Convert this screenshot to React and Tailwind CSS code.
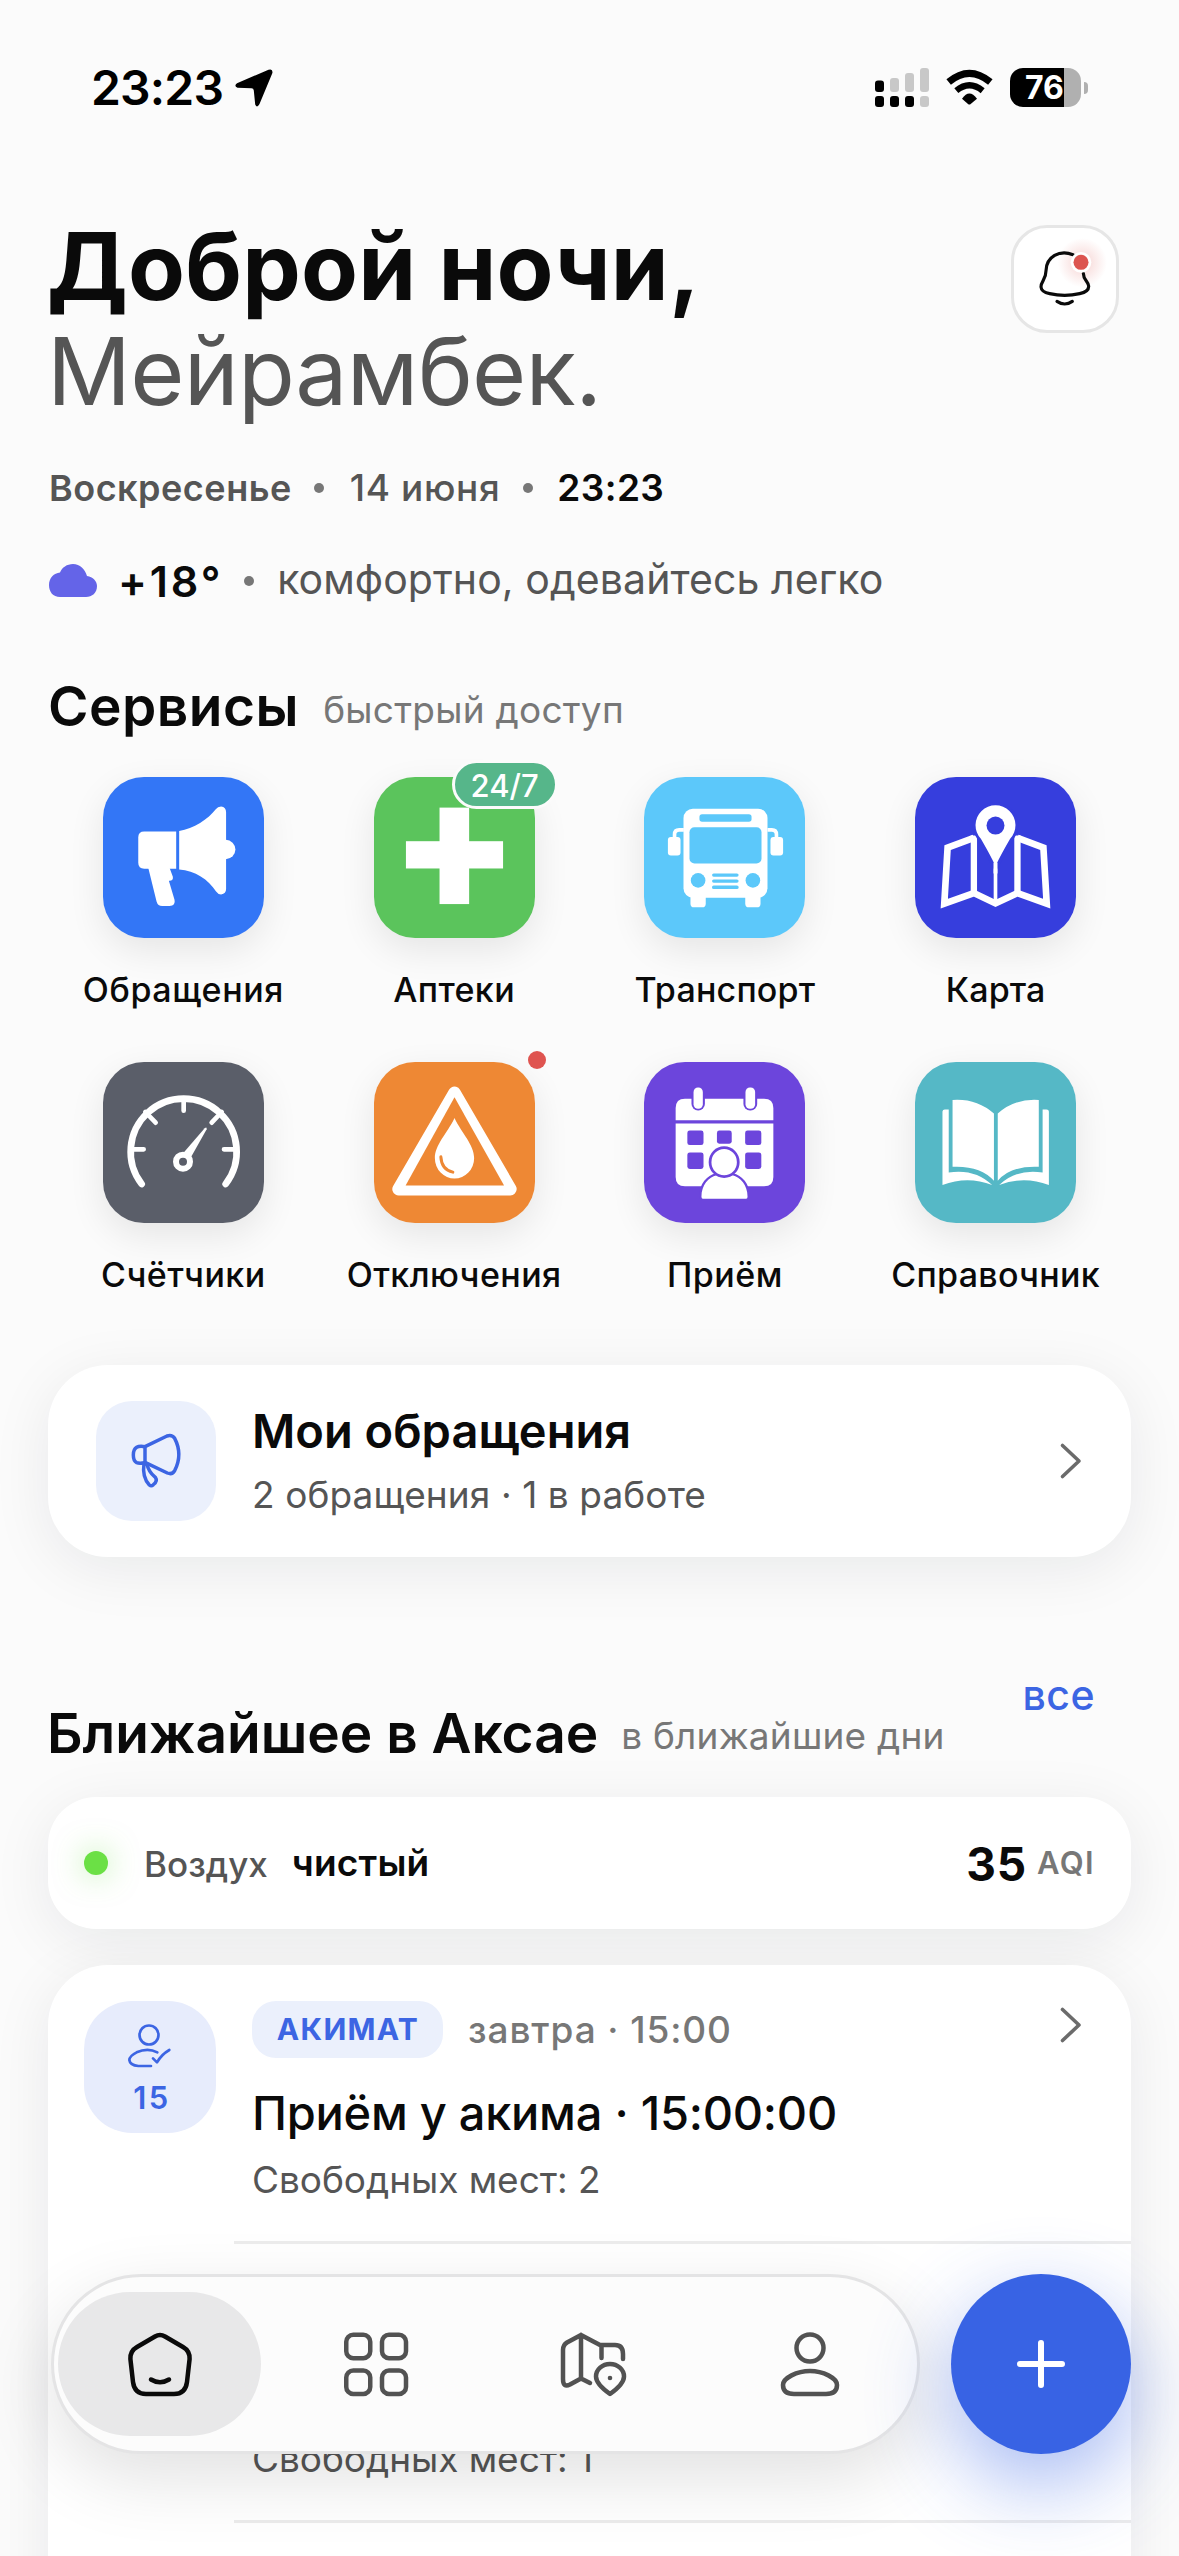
function StatusBar() {
  return (
    <div className="flex h-[175px] items-center pl-[91px] pr-[91px] text-black">
      <span className="text-[48px] font-semibold tracking-[-0.8px]">23:23</span>
      <svg className="ml-[12px] h-[38px] w-[38px]" viewBox="0 0 38 38">
        <path d="M33.5.8Q38-.8 37.4 4L24.5 35Q22 39.500 20.200 35.500L18.800 21.500Q18.600 19.300 16.500 19.200L2.500 18.800Q-1.500 17 2 14.200Z" />
      </svg>
      <div className="ml-auto flex items-center">
        <svg className="h-[39px] w-[54px]" viewBox="0 0 54 39">
          <rect x="0" y="12.500" width="9" height="11.500" rx="3" />
          <rect x="15" y="10" width="9" height="14" rx="3" fill="#c8c8c8" />
          <rect x="30" y="5" width="9" height="19" rx="3" fill="#c8c8c8" />
          <rect x="45" y="0" width="9" height="24" rx="3" fill="#c8c8c8" />
          <rect x="0" y="28" width="9" height="11" rx="3" />
          <rect x="15" y="28" width="9" height="11" rx="3" />
          <rect x="30" y="28" width="9" height="11" rx="3" />
          <rect x="45" y="28" width="9" height="11" rx="3" fill="#c8c8c8" />
        </svg>
        <svg className="ml-[17px] h-[39px] w-[47px]" viewBox="258 55 141 117" fill="none" stroke="#000">
          <path d="M266 97Q328 45 391 97" strokeWidth="21" />
          <path d="M289 123Q328 91 368 123" strokeWidth="19" />
          <path d="M306 147Q328 116 351 147L332 163Q328 166 324 163Z" fill="#000" stroke="none" />
        </svg>
        <div className="ml-[17px] flex h-[39px] w-[71px] items-center overflow-hidden rounded-[13px] bg-[linear-gradient(90deg,#000_54px,#b0b0b0_54px)] pl-[15px]">
          <span className="text-[32px] font-bold leading-[39px] text-white">76</span>
        </div>
        <div className="ml-[3px] h-[12px] w-[4px] rounded-r-full bg-[#b0b0b0]" />
      </div>
    </div>
  );
}

function Bell() {
  return (
    <button className="mr-[12px] mt-[11px] h-[108px] w-[108px] shrink-0 rounded-[36px] border-[3px] border-[#e6e6e6] bg-white">
      <svg className="-m-[3px] h-[108px] w-[108px]" viewBox="454 525 324 324" fill="none" stroke="#0a0a0a" strokeWidth="9.500" strokeLinecap="round">
        <defs>
          <radialGradient id="bellGlow">
            <stop offset="0.3" stopColor="#dc5550" stopOpacity="0.18" />
            <stop offset="1" stopColor="#dc5550" stopOpacity="0" />
          </radialGradient>
        </defs>
        <circle cx="668" cy="638" r="74" fill="url(#bellGlow)" stroke="none" />
        <path d="M640 614C600 598 560 620 559 662C559 690 544 692 544 711Q545 726 570 731Q615 741 660 731Q688 725 687 708C686 694 671 690 671 670" />
        <path d="M592 754Q615 770 638 754" />
        <circle cx="664" cy="637" r="31" fill="#fff" stroke="none" />
        <circle cx="664" cy="637" r="22.500" fill="#dc5550" stroke="none" />
      </svg>
    </button>
  );
}

function MegaphoneTile() {
  return (
    <svg className="h-full w-full" viewBox="68 82 484 484" fill="#fff">
      <path d="M288 246H192Q174 246 174 264V340Q174 358 192 358H288Z" />
      <path d="M204 355L229 456Q233 470 246 470H268Q287 469 283 451L266 394Q280 395 278 382L268 355Z" />
      <path d="M297 244C340 238 385 208 407 179Q413 171 423 171Q438 173 438 188V419Q438 434 423 435Q414 435 408 426C385 390 345 364 297 360Z" />
      <circle cx="437" cy="300" r="29" />
    </svg>
  );
}

function CrossTile() {
  return (
    <svg className="h-full w-full" viewBox="881 84 484 480" fill="#fff">
      <rect x="1078" y="174" width="89" height="290" />
      <rect x="977" y="275" width="292" height="82" />
    </svg>
  );
}

function BusTile() {
  return (
    <svg className="h-full w-full" viewBox="132 84 485 480" fill="#fff">
      <rect x="251" y="177" width="253" height="268" rx="28" />
      <rect x="272" y="420" width="46" height="54" rx="11" />
      <rect x="437" y="420" width="46" height="54" rx="11" />
      <rect x="204" y="262" width="38" height="56" rx="9" />
      <rect x="513" y="262" width="38" height="56" rx="9" />
      <path d="M252 241H238Q224 241 224 255V266M504 241H517Q531 241 531 255V266" fill="none" stroke="#fff" strokeWidth="11" />
      <g fill="#5cc8fa">
        <rect x="299" y="194" width="157" height="22" rx="8" />
        <rect x="269" y="233" width="217" height="109" rx="15" />
        <circle cx="295" cy="393" r="22" />
        <circle cx="460" cy="393" r="22" />
        <rect x="337" y="372" width="80" height="10" rx="5" />
        <rect x="337" y="390" width="80" height="10" rx="5" />
        <rect x="337" y="408" width="80" height="11" rx="5" />
      </g>
    </svg>
  );
}

function MapTile() {
  return (
    <svg className="h-full w-full" viewBox="945 82 484 484" fill="none" stroke="#fff">
      <path d="M1122 265L1043 294L1033 463L1122 431L1187 462L1253 431L1341 463L1331 294L1253 265" strokeWidth="20" strokeMiterlimit="6" />
      <path d="M1122 258V434M1253 258V434" strokeWidth="19" />
      <path d="M1187 340V462" strokeWidth="11" />
      <path d="M1187 350L1139 262A60 60 0 1 1 1235 262Z" stroke="#363edd" strokeWidth="18" />
      <path d="M1181 340H1193V372H1181Z" fill="#fff" stroke="none" />
      <path d="M1187 352Q1180 332 1143 268A60 60 0 1 1 1231 268Q1194 332 1187 352Z" fill="#fff" stroke="none" />
      <circle cx="1187" cy="228" r="27" fill="#363edd" stroke="none" />
    </svg>
  );
}

function GaugeTile() {
  return (
    <svg className="h-full w-full" viewBox="130 97 481 483" fill="none" stroke="#fff" strokeLinecap="round">
      <path d="M245 463A159 159 0 1 1 497 463" strokeWidth="20" />
      <path d="M371 206V243M256 247L287 279M485 247L455 279M214 359H251M492 359H528" strokeWidth="14" />
      <path d="M368 372L434 296Q441 290 440 299L392 384Z" fill="#fff" stroke="none" />
      <circle cx="369" cy="396" r="21" strokeWidth="18" />
    </svg>
  );
}

function OutageTile() {
  return (
    <svg className="h-full w-full" viewBox="941 99 484 480" fill="#fff">
      <path d="M1183 190L1015 479H1351Z" stroke="#fff" strokeWidth="38" strokeLinejoin="round" />
      <path d="M1183 203L1332 468H1036Z" fill="#ee8834" />
      <path d="M1183 265C1205 312 1242 345 1242 386A59 61 0 0 1 1124 386C1124 345 1161 312 1183 265Z" />
      <path d="M1142 382Q1144 420 1178 428" fill="none" stroke="#ee8834" strokeWidth="9" strokeLinecap="round" />
    </svg>
  );
}

function CalendarTile() {
  return (
    <svg className="h-full w-full" viewBox="129 99 468 479" preserveAspectRatio="none" fill="#fff">
      <path d="M221 272V236Q221 208 248 208H478Q505 208 505 236V272Z" />
      <path d="M221 282H505V441Q505 469 478 469H248Q221 469 221 441Z" />
      <g fill="#6c45dc">
        <rect x="267" y="180" width="39" height="63" rx="19" />
        <rect x="418" y="180" width="40" height="63" rx="19" />
        <rect x="255" y="303" width="47" height="43" rx="7" />
        <rect x="341" y="303" width="43" height="39" rx="7" />
        <rect x="423" y="303" width="47" height="43" rx="7" />
        <rect x="255" y="368" width="47" height="49" rx="7" />
        <rect x="423" y="368" width="47" height="49" rx="7" />
      </g>
      <rect x="273" y="175" width="27" height="63" rx="13" />
      <rect x="424" y="175" width="28" height="63" rx="13" />
      <path d="M300 505Q296 505 296 498C296 465 317 441 340 436Q362 446 386 436C409 441 430 465 430 498Q430 505 426 505Z" stroke="#6c45dc" strokeWidth="13" />
      <path d="M300 506Q296 506 296 500C296 465 317 441 340 436Q362 446 386 436C409 441 430 465 430 500Q430 506 426 506Z" />
      <ellipse cx="362" cy="397" rx="41" ry="43" stroke="#6c45dc" strokeWidth="8" />
    </svg>
  );
}

function BookTile() {
  return (
    <svg className="h-full w-full" viewBox="917 97 463 484" preserveAspectRatio="none" fill="#fff">
      <path d="M1025 211Q1094 206 1144 252V454Q1105 408 1025 412Z" />
      <path d="M1273 211Q1204 206 1155 252V454Q1193 408 1273 412Z" />
      <path d="M996 246Q996 240 1003 240H1014V429Q1090 417 1139 467Q1068 438 996 467Z" />
      <path d="M1302 246Q1302 240 1295 240H1284V429Q1208 417 1159 467Q1230 438 1302 467Z" />
    </svg>
  );
}

const services = [
  { label: "Обращения", bg: "bg-[#3376f6]", tracking: "tracking-[0.6px]", Icon: MegaphoneTile },
  { label: "Аптеки", bg: "bg-[#5bc45c]", tracking: "tracking-[0.4px]", Icon: CrossTile, badge: "24/7" },
  { label: "Транспорт", bg: "bg-[#5cc8fa]", tracking: "tracking-[0.2px]", Icon: BusTile },
  { label: "Карта", bg: "bg-[#363edd]", tracking: "tracking-[0.1px]", Icon: MapTile },
  { label: "Счётчики", bg: "bg-[#5a5e69]", tracking: "tracking-[0.5px]", Icon: GaugeTile },
  { label: "Отключения", bg: "bg-[#ee8834]", tracking: "tracking-[0.4px]", Icon: OutageTile, dot: true },
  { label: "Приём", bg: "bg-[#6c45dc]", tracking: "tracking-[0.5px]", Icon: CalendarTile },
  { label: "Справочник", bg: "bg-[#55b8c6]", tracking: "tracking-[0.3px]", Icon: BookTile },
];

function Service({ label, bg, tracking, Icon, badge, dot }) {
  return (
    <div className="flex flex-col items-center">
      <div className={`relative h-[161px] w-[161px] rounded-[41px] shadow-[0_12px_36px_rgba(0,0,0,0.09)] ${bg}`}>
        <Icon />
        {badge && (
          <span className="absolute -right-[23px] -top-[17px] flex h-[49px] w-[106px] items-center justify-center rounded-full border-[3px] border-[#fbfbfb] bg-[#56b68a] pt-[1px] text-[31px] font-medium leading-none text-white">
            {badge}
          </span>
        )}
        {dot && <span className="absolute -right-[11px] -top-[11px] h-[18px] w-[18px] rounded-full bg-[#df5450]" />}
      </div>
      <span className={`mt-[32px] whitespace-nowrap text-[34px] font-medium leading-[40px] text-[#0a0a0a] ${tracking}`}>{label}</span>
    </div>
  );
}

function Chevron({ className }) {
  return (
    <svg className={`h-[40px] w-[24px] ${className}`} viewBox="0 0 24 40" fill="none" stroke="#6b6b6b" strokeWidth="3.600" strokeLinecap="round" strokeLinejoin="round">
      <path d="M3.500 4.500L20 20L3.500 35.500" />
    </svg>
  );
}

function MyRequests() {
  return (
    <div className="mt-[70px] flex h-[192px] items-center rounded-[60px] bg-white pl-[48px] pr-[48px] shadow-[0_12px_60px_rgba(15,23,42,0.08)]">
      <div className="h-[120px] w-[120px] rounded-[36px] bg-[#ebf0fc]">
        <svg className="h-full w-full" viewBox="48 3 360 360" fill="none" stroke="#3c65e3" strokeWidth="10.500" strokeLinejoin="round" strokeLinecap="round">
          <path d="M195 140L261 108Q276 103 284 115Q309 163 284 212Q277 225 262 219L195 187Z" />
          <path d="M195 140Q178 137 170 142Q160 148 160 165Q160 183 170 188Q178 191 195 188" />
          <path d="M192 190Q186 232 208 255Q214 260 220 254Q234 244 226 232Q205 215 201 192" />
        </svg>
      </div>
      <div className="-mt-[6px] ml-[36px]">
        <div className="text-[47px] font-semibold leading-[60px]">Мои обращения</div>
        <div className="mt-[14px] text-[37px] leading-[40px] tracking-[0.100px] text-[#555]">2 обращения · 1 в работе</div>
      </div>
      <Chevron className="ml-auto" />
    </div>
  );
}

function AirCard() {
  return (
    <div className="mt-[34px] flex h-[132px] items-center rounded-[48px] bg-white pl-[36px] pr-[36px] shadow-[0_12px_60px_rgba(15,23,42,0.08)]">
      <span className="h-[24px] w-[24px] rounded-full bg-[#6be045] shadow-[0_0_30px_rgba(107,224,69,0.5)]" />
      <span className="ml-[36px] mt-[3px] text-[35px] font-medium text-[#555]">Воздух</span>
      <span className="ml-[24px] text-[37px] font-semibold tracking-[0.200px]">чистый</span>
      <span className="ml-auto mt-[3px] text-[46px] font-bold tracking-[0.800px]">35</span>
      <span className="ml-[10px] text-[31px] font-semibold tracking-[1.400px] text-[#777]">AQI</span>
    </div>
  );
}

function Events() {
  return (
    <div className="mt-[36px] h-[700px] rounded-[60px] bg-white shadow-[0_12px_60px_rgba(15,23,42,0.08)]">
      <div className="flex h-[276px] pl-[36px] pr-[48px] pt-[36px]">
        <div className="flex h-[132px] w-[132px] flex-col items-center rounded-[48px] bg-[#e7ecfc]">
          <svg className="mt-[20px] h-[50px] w-[50px]" viewBox="135 78 150 150" fill="none" stroke="#3c65e3" strokeWidth="8" strokeLinecap="round" strokeLinejoin="round">
            <circle cx="207" cy="120" r="28.500" />
            <path d="M232 172Q203 157 170 172Q148 183 148 195Q150 211 175 213H213" />
            <path d="M219 190L231 202Q245 178 268 165" />
          </svg>
          <span className="mt-[7px] pl-[4px] text-[31px] font-semibold leading-[40px] tracking-[2.500px] text-[#3c65e3]">15</span>
        </div>
        <div className="ml-[36px]">
          <div className="flex items-center">
            <span className="flex h-[57px] w-[191px] items-center justify-center rounded-[24px] bg-[#ebf0fc] pl-[1px] text-[30px] font-bold tracking-[1.300px] text-[#3c65e3]">АКИМАТ</span>
            <span className="ml-[25px] text-[37px] font-medium leading-[40px] tracking-[0.900px] text-[#777]">завтра · 15:00</span>
          </div>
          <div className="mt-[25px] text-[47px] font-medium leading-[60px] tracking-[-0.26px]">Приём у акима · 15:00:00</div>
          <div className="mt-[17px] text-[37px] leading-[40px] tracking-[-0.05px] text-[#555]">Свободных мест: 2</div>
        </div>
        <Chevron className="ml-auto mt-[4px]" />
      </div>
      <div className="ml-[186px] h-[3px] bg-[#ececec]" />
      <div className="flex h-[276px] flex-col justify-end pb-[41px] pl-[204px]">
        <div className="text-[37px] leading-[40px] tracking-[-0.05px] text-[#555]">Свободных мест: 1</div>
      </div>
      <div className="ml-[186px] h-[3px] bg-[#ececec]" />
    </div>
  );
}

function NavIcon({ children, color = "#525252" }) {
  return (
    <svg className="h-[72px] w-[72px]" viewBox="0 0 72 72" fill="none" stroke={color} strokeWidth="4.500" strokeLinecap="round" strokeLinejoin="round">
      {children}
    </svg>
  );
}

function BottomNav() {
  return (
    <div className="absolute left-[51px] top-[2274px] flex w-[1080px] items-start">
      <nav className="flex h-[180px] w-[869px] items-center rounded-full border-[3px] border-[#e4e4e5] bg-[#fcfcfc] pl-[4px] shadow-[0_24px_72px_rgba(0,0,0,0.12)]">
        <div className="flex h-[144px] w-[203px] items-center justify-center rounded-[72px] bg-[#e8e8e9]">
          <NavIcon color="#0a0a0a">
            <path d="M31 8.500Q36 5.500 41 8.500L59 19Q66 23 65.600 31L63 54Q61.500 66 50 66H22Q10.500 66 9 54L6.400 31Q6 23 13 19Z" />
            <path d="M27 51.500Q36 57 45 51.500" />
          </NavIcon>
        </div>
        <div className="ml-[79px]">
          <NavIcon>
            <rect x="6.250" y="6.750" width="24" height="23.500" rx="7" />
            <rect x="42" y="6.750" width="24" height="23.500" rx="7" />
            <rect x="6.250" y="42.500" width="24" height="23.500" rx="7" />
            <rect x="42" y="42.500" width="24" height="23.500" rx="7" />
          </NavIcon>
        </div>
        <div className="ml-[145px]">
          <NavIcon>
            <path d="M24 7L10 14.500Q6 17 6 22V51Q6 60 13 56.500L24 50.500L33 55M24 7V50M24 7L43 17H58Q66 17 66 26V31M44.500 17V30" />
            <path d="M53 66Q39 56 39 48.500A14 12.500 0 0 1 67 48.500Q67 56 53 66Z" />
            <circle cx="53" cy="50" r="2.300" fill="#525252" stroke="none" />
          </NavIcon>
        </div>
        <div className="ml-[145px]">
          <NavIcon>
            <circle cx="36" cy="20" r="13.500" />
            <path d="M36 43C49 43 63 50 63 57Q63 66 52 66H20Q9 66 9 57C9 50 23 43 36 43Z" />
          </NavIcon>
        </div>
      </nav>
      <button className="ml-auto flex h-[180px] w-[180px] items-center justify-center rounded-full bg-[#3863e4] shadow-[0_30px_84px_rgba(56,99,228,0.45)]">
        <svg className="h-[54px] w-[54px]" viewBox="0 0 54 54" stroke="#fff" strokeWidth="6" strokeLinecap="round">
          <path d="M27 6V48M6 27H48" />
        </svg>
      </button>
    </div>
  );
}

export default function App() {
  return (
    <div className="relative h-[2556px] w-[1179px] overflow-hidden bg-[#fbfbfb] font-['Inter',sans-serif] text-[#0a0a0a]">
      <StatusBar />
      <main className="px-[48px]">
        <header className="mt-[39px] flex justify-between">
          <h1 className="text-[93px] leading-[105px]">
            <span className="-ml-[1px] block font-bold tracking-[0.200px]">Доброй ночи,</span>
            <span className="-ml-[1px] block font-normal tracking-[-0.700px] text-[#555]">Мейрамбек.</span>
          </h1>
          <Bell />
        </header>

        <div className="mt-[44px] flex h-[40px] items-center">
          <span className="ml-[1px] text-[36px] font-semibold tracking-[0.500px] text-[#555]">Воскресенье</span>
          <span className="ml-[22px] h-[10px] w-[10px] rounded-full bg-[#777]" />
          <span className="ml-[26px] text-[37px] font-medium tracking-[0.600px] text-[#555]">14 июня</span>
          <span className="ml-[23px] h-[10px] w-[10px] rounded-full bg-[#777]" />
          <span className="ml-[24px] text-[37px] font-semibold tracking-[0.400px]">23:23</span>
        </div>

        <div className="mt-[50px] flex h-[40px] items-center">
          <svg className="ml-[1px] mt-[5px] h-[33px] w-[48px]" viewBox="0 0 48 33" fill="#6464e8">
            <path d="M11 33C4 33 0 28 0 21C0 14 5 9 11 8.500C13 3.500 18 0 24 0C31 0 36 5 38 12C44 13 48 17 48 22C48 29 43 33 37 33Z" />
          </svg>
          <span className="ml-[21px] mt-[5px] text-[43px] font-semibold leading-[40px] tracking-[2.800px]">+18°</span>
          <span className="ml-[21px] mt-[5px] h-[10px] w-[10px] rounded-full bg-[#777]" />
          <span className="ml-[23px] mt-[2px] text-[41px] leading-[40px] tracking-[0.080px] text-[#555]">комфортно, одевайтесь легко</span>
        </div>

        <div className="mt-[78px] flex h-[60px] items-center">
          <h2 className="text-[55px] font-semibold tracking-[0.500px]">Сервисы</h2>
          <span className="ml-[24px] mt-[7px] text-[37px] tracking-[0.250px] text-[#777]">быстрый доступ</span>
        </div>

        <div className="mt-[41px] grid grid-cols-4 gap-y-[52px]">
          {services.map((s) => (
            <Service key={s.label} {...s} />
          ))}
        </div>

        <MyRequests />

        <div className="mt-[116px] flex h-[90px]">
          <div className="flex h-[60px] items-center self-end">
            <h2 className="-ml-[1px] text-[55px] font-semibold">Ближайшее в Аксае</h2>
            <span className="ml-[23px] mt-[6px] text-[37px] tracking-[0.200px] text-[#777]">в ближайшие дни</span>
          </div>
          <span className="ml-auto mr-[36px] text-[41px] font-medium leading-[44px] tracking-[0.500px] text-[#3c65e3]">все</span>
        </div>

        <AirCard />
        <Events />
      </main>
      <BottomNav />
    </div>
  );
}
